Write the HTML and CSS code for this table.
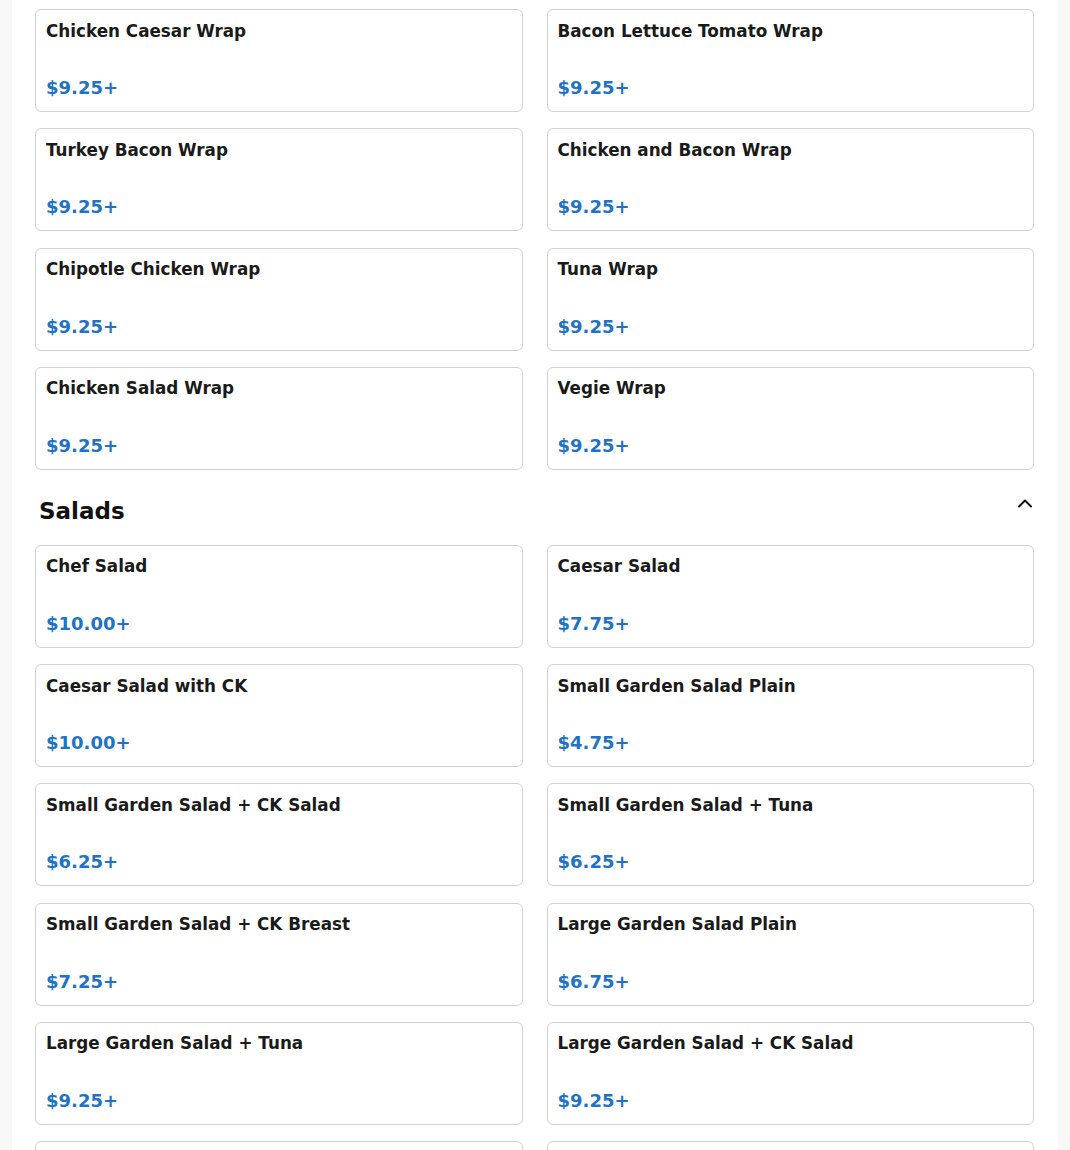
FILE: index.html
```html
<!DOCTYPE html>
<html lang="en">
<head>
<meta charset="utf-8">
<title>Menu</title>
<link rel="stylesheet" href="styles.css">
</head>
<body>
<main class="menu">
  <section class="section">
    <div class="grid">
      <div class="card"><div class="name">Chicken Caesar Wrap</div><div class="price">$9.25+</div></div>
      <div class="card"><div class="name">Bacon Lettuce Tomato Wrap</div><div class="price">$9.25+</div></div>
      <div class="card"><div class="name">Turkey Bacon Wrap</div><div class="price">$9.25+</div></div>
      <div class="card"><div class="name">Chicken and Bacon Wrap</div><div class="price">$9.25+</div></div>
      <div class="card"><div class="name">Chipotle Chicken Wrap</div><div class="price">$9.25+</div></div>
      <div class="card"><div class="name">Tuna Wrap</div><div class="price">$9.25+</div></div>
      <div class="card"><div class="name">Chicken Salad Wrap</div><div class="price">$9.25+</div></div>
      <div class="card"><div class="name">Vegie Wrap</div><div class="price">$9.25+</div></div>
    </div>
  </section>
  <section class="section">
    <div class="section-head">
      <h2 class="section-title">Salads</h2>
      <svg class="chevron" width="16" height="10" viewBox="0 0 16 10" aria-hidden="true"><path d="M2 8.5 L8 2.5 L14 8.5" fill="none" stroke="#111" stroke-width="2" stroke-linecap="round" stroke-linejoin="round"/></svg>
    </div>
    <div class="grid">
      <div class="card"><div class="name">Chef Salad</div><div class="price">$10.00+</div></div>
      <div class="card"><div class="name">Caesar Salad</div><div class="price">$7.75+</div></div>
      <div class="card"><div class="name">Caesar Salad with CK</div><div class="price">$10.00+</div></div>
      <div class="card"><div class="name">Small Garden Salad Plain</div><div class="price">$4.75+</div></div>
      <div class="card"><div class="name">Small Garden Salad + CK Salad</div><div class="price">$6.25+</div></div>
      <div class="card"><div class="name">Small Garden Salad + Tuna</div><div class="price">$6.25+</div></div>
      <div class="card"><div class="name">Small Garden Salad + CK Breast</div><div class="price">$7.25+</div></div>
      <div class="card"><div class="name">Large Garden Salad Plain</div><div class="price">$6.75+</div></div>
      <div class="card"><div class="name">Large Garden Salad + Tuna</div><div class="price">$9.25+</div></div>
      <div class="card"><div class="name">Large Garden Salad + CK Salad</div><div class="price">$9.25+</div></div>
      <div class="card"><div class="name">Large Garden Salad + CK Breast</div><div class="price">$10.25+</div></div>
      <div class="card"><div class="name">Greek Salad with Chicken</div><div class="price">$10.25+</div></div>
    </div>
  </section>
</main>
</body>
</html>
```

FILE: styles.css
```css
html, body {
  margin: 0;
  padding: 0;
  background: #f8f8f8;
}
body {
  font-family: "DejaVu Sans", Verdana, sans-serif;
  color: #1c1c1c;
}
.menu {
  width: 1046px;
  box-sizing: border-box;
  margin-left: 12px;
  padding: 9px 24px 40px 23px;
  background: #ffffff;
}
.grid {
  display: grid;
  grid-template-columns: 1fr 1fr;
  column-gap: 24px;
  row-gap: 16.25px;
}
.card {
  height: 103px;
  box-sizing: border-box;
  border: 1px solid #d3d3d3;
  border-radius: 6px;
  padding: 10.5px 10px 13px;
  display: flex;
  flex-direction: column;
  justify-content: space-between;
  background: #fff;
}
.name {
  font-size: 16.8px;
  font-weight: 700;
  color: #1a1a1a;
}
.price {
  font-size: 18px;
  font-weight: 700;
  color: #1f72c4;
}
.section-head {
  display: flex;
  align-items: flex-start;
  justify-content: space-between;
  margin: 28px 0 20px;
  padding: 0 1px 0 4px;
}
.section-title {
  margin: 0;
  font-size: 23px;
  font-weight: 700;
  color: #111;
  line-height: 27px;
}
.chevron {
  display: block;
}
```
